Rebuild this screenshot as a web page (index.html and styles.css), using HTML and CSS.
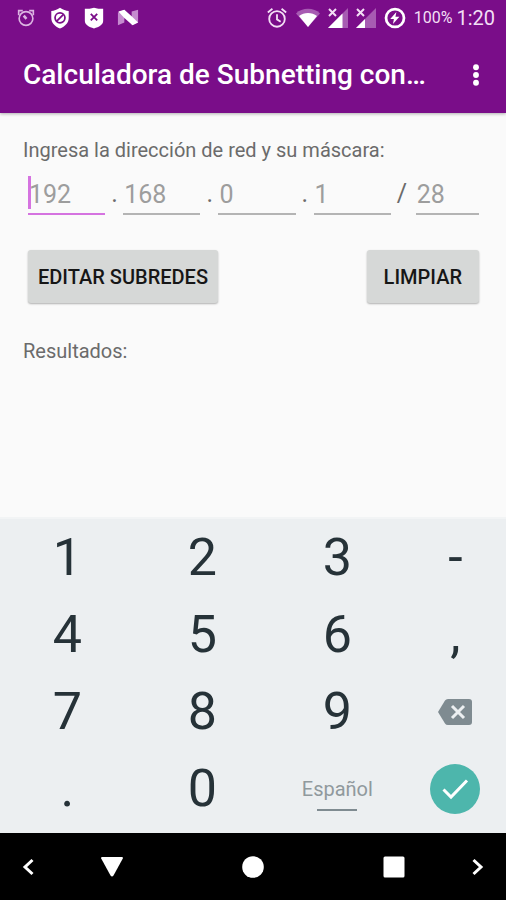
FILE: index.html
```html
<!DOCTYPE html>
<html lang="es">
<head>
<meta charset="utf-8">
<meta name="viewport" content="width=device-width, initial-scale=1">
<title>Calculadora de Subnetting</title>
<link rel="stylesheet" href="styles.css">
</head>
<body>
<header class="top">
  <div class="status">
    <div class="status-left">
      <svg class="icon" viewBox="0 0 24 24"><g fill="none" stroke="#dcb5e2" stroke-width="1.8"><circle cx="12" cy="12.500" r="7.500"/><path d="M4 9V4H8.500M15.500 4H20V9"/><path d="M9.500 9.500l3 3.500" stroke-width="2.800"/></g></svg>
      <svg class="icon" viewBox="0 0 24 24"><path fill="#fff" d="M12 .8C9 3 5.500 4 2.500 4.300V12c0 5.300 4 9.300 9.500 11.400 5.500-2.100 9.500-6.100 9.500-11.400V4.300C18.500 4 15 3 12 .8z"/><g fill="none" stroke="#7a0d89" stroke-width="1.900"><circle cx="12" cy="11.800" r="5.400"/><path d="M15.800 8l-7.600 7.600"/></g></svg>
      <svg class="icon" viewBox="0 0 24 24"><path fill="#fff" d="M12 .8C9 1.800 5.500 2 2 2V15c0 4.300 4.500 6.800 10 8.400 5.500-1.600 10-4.100 10-8.400V2C18.500 2 15 1.800 12 .8z"/><path fill="none" stroke="#7a0d89" stroke-width="2" d="M8.500 7.500l7 7M15.500 7.500l-7 7"/></svg>
      <svg class="icon" viewBox="0 0 24 24"><path fill="#c58bcf" d="M1 6l7-3v14l-7 3zM16 5l7-2v14l-7 3z"/><path fill="#fff" d="M1.500 5L8 3l8 7 7 7-6 3-9-8z"/></svg>
    </div>
    <div class="status-right">
      <svg class="icon" viewBox="0 0 24 24"><g fill="none" stroke="#f3dff5" stroke-width="2"><circle cx="12" cy="13" r="8.500"/><path d="M12 8v5.500l4 2.500M2 6l5-4M22 6l-5-4"/></g></svg>
      <svg class="icon icon-wifi" viewBox="0 0 24 24"><path fill="#a75bb2" d="M0 7.500C6 1.300 18 1.300 24 7.500L12 21z"/><path fill="#fff" d="M3 10c5-4 13-4 18 0l-9 11z"/></svg>
      <svg class="icon icon-signal" viewBox="2 2 20 20"><path fill="#a75bb2" d="M22 2v20H2z"/><path fill="#fff" d="M16.500 7.500V22H2z"/><path fill="none" stroke="#f3dff5" stroke-width="2" d="M3 3l7 7M10 3l-7 7"/></svg>
      <svg class="icon icon-signal" viewBox="2 2 20 20"><path fill="#a75bb2" d="M22 2v20H2z"/><path fill="#fff" d="M11 13v9H2z"/><path fill="none" stroke="#f3dff5" stroke-width="2" d="M3 3l7 7M10 3l-7 7"/></svg>
      <svg class="icon" viewBox="0 0 24 24"><circle cx="12" cy="12" r="9.800" fill="none" stroke="#fff" stroke-width="3"/><path fill="#fff" d="M13.500 5.500L6.800 13h4l-1 5.500 7-8h-4.300z"/></svg>
      <span class="battery">100%</span>
      <span class="clock">1:20</span>
    </div>
  </div>
  <div class="appbar">
    <h1 class="title">Calculadora de Subnetting con…</h1>
    <button class="more" type="button" aria-label="Más opciones">
      <svg class="icon" viewBox="0 0 24 24" fill="#fff"><circle cx="12" cy="3.500" r="3.200"/><circle cx="12" cy="12" r="3.200"/><circle cx="12" cy="20.500" r="3.200"/></svg>
    </button>
  </div>
</header>

<main class="content">
  <p class="label" id="address-label">Ingresa la dirección de red y su máscara:</p>
  <div class="address" role="group" aria-labelledby="address-label">
    <div class="field field-active"><input class="octet" type="text" inputmode="numeric" placeholder="192" aria-label="Octeto 1"></div>
    <span class="separator">.</span>
    <div class="field"><input class="octet" type="text" inputmode="numeric" placeholder="168" aria-label="Octeto 2"></div>
    <span class="separator">.</span>
    <div class="field"><input class="octet" type="text" inputmode="numeric" placeholder="0" aria-label="Octeto 3"></div>
    <span class="separator">.</span>
    <div class="field"><input class="octet" type="text" inputmode="numeric" placeholder="1" aria-label="Octeto 4"></div>
    <span class="separator slash">/</span>
    <div class="field field-mask"><input class="octet" type="text" inputmode="numeric" placeholder="28" aria-label="Máscara"></div>
  </div>
  <div class="actions">
    <button class="button" type="button">EDITAR SUBREDES</button>
    <button class="button button-wide" type="button">LIMPIAR</button>
  </div>
  <p class="label">Resultados:</p>
</main>

<section class="keyboard" aria-label="Teclado">
  <button class="key" type="button">1</button>
  <button class="key" type="button">2</button>
  <button class="key" type="button">3</button>
  <button class="key" type="button">-</button>
  <button class="key" type="button">4</button>
  <button class="key" type="button">5</button>
  <button class="key" type="button">6</button>
  <button class="key" type="button">,</button>
  <button class="key" type="button">7</button>
  <button class="key" type="button">8</button>
  <button class="key" type="button">9</button>
  <button class="key" type="button" aria-label="Borrar">
    <svg class="backspace" viewBox="0 0 34 26"><path fill="#7f8b91" d="M10 0H31q3 0 3 3V23q0 3-3 3H10q-2 0-3-1.500L0 13 7 1.500Q8 0 10 0z"/><path fill="none" stroke="#eceff1" stroke-width="3" d="M14 7l12 12M26 7L14 19"/></svg>
  </button>
  <button class="key" type="button">.</button>
  <button class="key" type="button">0</button>
  <button class="key" type="button"><span class="language">Español</span></button>
  <button class="key" type="button" aria-label="Aceptar">
    <svg class="accept" viewBox="0 0 50 50"><circle cx="25" cy="25" r="25" fill="#4db6ac"/><path fill="none" stroke="#fff" stroke-width="3" d="M13.500 25.500l7.500 7.500L37 16.500"/></svg>
  </button>
</section>

<nav class="navbar" aria-label="Sistema">
  <button class="nav nav-first" type="button" aria-label="Anterior"><svg class="nav-icon" viewBox="0 0 28 28"><path fill="none" stroke="#fff" stroke-width="3" d="M18.500 7L11 14l7.500 7"/></svg></button>
  <button class="nav" type="button" aria-label="Atrás"><svg class="nav-icon" viewBox="0 0 28 28"><path fill="#fff" d="M4 4h20q1.500 0 .8 1.500L15.500 22.500q-1.500 2-3 0L3.200 5.500Q2.500 4 4 4z"/></svg></button>
  <button class="nav" type="button" aria-label="Inicio"><svg class="nav-icon" viewBox="0 0 28 28"><circle cx="14" cy="14" r="10.800" fill="#fff"/></svg></button>
  <button class="nav" type="button" aria-label="Recientes"><svg class="nav-icon" viewBox="0 0 28 28"><rect x="3.500" y="3.500" width="21" height="21" rx="1.500" fill="#fff"/></svg></button>
  <button class="nav nav-last" type="button" aria-label="Siguiente"><svg class="nav-icon" viewBox="0 0 28 28"><path fill="none" stroke="#fff" stroke-width="3" d="M9.500 7L17 14l-7.500 7"/></svg></button>
</nav>
</body>
</html>
```

FILE: styles.css
```css
* {
  box-sizing: border-box;
}

body {
  margin: 0;
  min-height: 100vh;
  display: flex;
  flex-direction: column;
  background: #fafafa;
  color: #6b6b6b;
  font-family: Roboto, "Liberation Sans", sans-serif;
}

button {
  padding: 0;
  border: 0;
  background: none;
  color: inherit;
  font-family: inherit;
}

svg {
  display: block;
  flex: none;
}

.top {
  background: #7a0d89;
  color: #fff;
  box-shadow: 0 1px 3px rgba(0, 0, 0, 0.3);
}

.status {
  display: flex;
  justify-content: space-between;
  height: 35px;
  padding: 0 11px 0 15px;
}

.status-left,
.status-right {
  display: flex;
  align-items: center;
}

.status-left {
  gap: 12px;
}

.status-right {
  gap: 8px;
}

.icon {
  width: 22px;
  height: 22px;
}

.icon-wifi {
  width: 24px;
  height: 24px;
}

.icon-signal {
  width: 20px;
  height: 20px;
}

.battery,
.clock {
  color: #f3dff5;
  line-height: 24px;
}

.battery {
  font-size: 16px;
}

.clock {
  margin-left: -4px;
  font-size: 20px;
}

.appbar {
  display: flex;
  align-items: center;
  justify-content: space-between;
  height: 78px;
  padding: 2px 19px 0 23px;
}

.title {
  margin: 0;
  overflow: hidden;
  font-size: 28px;
  font-weight: 500;
  line-height: 36px;
  white-space: nowrap;
  text-overflow: ellipsis;
}

.content {
  flex: 1;
  padding: 25px 23px;
}

.label {
  margin: 0;
  font-size: 20px;
  line-height: 24px;
}

.address {
  display: flex;
  align-items: center;
  margin: 11px 4px 35px 5px;
}

.field {
  position: relative;
  flex: 77;
  min-width: 0;
  border-bottom: 2px solid #b4b4b4;
}

.field-mask {
  flex: 63;
}

.field-active {
  border-color: #d573e0;
}

.field-active::before {
  content: "";
  position: absolute;
  top: 3px;
  left: 0;
  width: 3px;
  height: 33px;
  background: #d573e0;
}

.octet {
  display: block;
  width: 100%;
  height: 40px;
  padding: 2px 0 0 1px;
  border: 0;
  outline: 0;
  background: transparent;
  color: #424242;
  font: 25px/38px Roboto, "Liberation Sans", sans-serif;
}

.octet::placeholder {
  color: #9d9d9d;
  opacity: 1;
}

.separator {
  width: 18px;
  padding-left: 6px;
  font-size: 25px;
  line-height: 40px;
}

.slash {
  width: 25px;
}

.actions {
  display: flex;
  justify-content: space-between;
  margin: 0 4px 36px 5px;
}

.button {
  height: 53px;
  padding: 0 10px;
  border-radius: 3px;
  background: #d6d8d7;
  box-shadow: 0 1px 2px rgba(0, 0, 0, 0.3);
  color: #161616;
  font-size: 20px;
  font-weight: 500;
}

.button-wide {
  padding: 0 17px;
}

.keyboard {
  display: grid;
  grid-template-columns: 4fr 4fr 4fr 3fr;
  grid-auto-rows: 77px;
  padding-bottom: 6px;
  border-top: 2px solid #f2f4f5;
  background: #eceff1;
  color: #263238;
}

.key {
  display: flex;
  align-items: center;
  justify-content: center;
  font-size: 52px;
  line-height: 60px;
}

.backspace {
  width: 34px;
  height: 26px;
}

.accept {
  width: 50px;
  height: 50px;
}

.language {
  position: relative;
  color: #90999d;
  font-size: 20px;
  line-height: 24px;
}

.language::after {
  content: "";
  position: absolute;
  top: 32px;
  left: 50%;
  width: 40px;
  height: 2px;
  margin-left: -20px;
  background: #7f8b91;
}

.navbar {
  display: grid;
  grid-template-columns: 42px 1fr 1fr 1fr 42px;
  height: 67px;
  background: #000;
}

.nav {
  display: flex;
  align-items: center;
  justify-content: center;
}

.nav-first {
  justify-content: flex-end;
}

.nav-last {
  justify-content: flex-start;
}

.nav-icon {
  width: 28px;
  height: 28px;
}
```
